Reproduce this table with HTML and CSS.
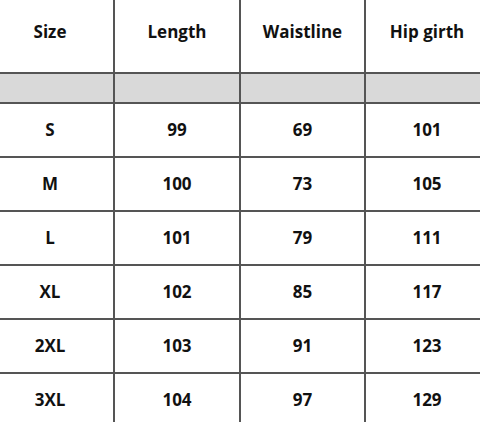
FILE: index.html
```html
<!DOCTYPE html>
<html lang="en">
<head>
<meta charset="utf-8">
<title>Size chart</title>
<link rel="stylesheet" href="styles.css">
</head>
<body>
<div class="chart">
  <div class="cell head">Size</div>
  <div class="cell head">Length</div>
  <div class="cell head">Waistline</div>
  <div class="cell head">Hip girth</div>

  <div class="cell band"></div>
  <div class="cell band"></div>
  <div class="cell band"></div>
  <div class="cell band"></div>

  <div class="cell">S</div><div class="cell">99</div><div class="cell">69</div><div class="cell">101</div>
  <div class="cell">M</div><div class="cell">100</div><div class="cell">73</div><div class="cell">105</div>
  <div class="cell">L</div><div class="cell">101</div><div class="cell">79</div><div class="cell">111</div>
  <div class="cell">XL</div><div class="cell">102</div><div class="cell">85</div><div class="cell">117</div>
  <div class="cell">2XL</div><div class="cell">103</div><div class="cell">91</div><div class="cell">123</div>
  <div class="cell">3XL</div><div class="cell">104</div><div class="cell">97</div><div class="cell">129</div>
</div>
</body>
</html>
```
FILE: styles.css
```css
html, body {
  margin: 0;
  padding: 0;
  background: #ffffff;
  overflow: hidden;
}

body {
  width: 480px;
  height: 422px;
}

.chart {
  display: grid;
  grid-template-columns: 128px 126px 125px 122px;
  grid-template-rows: 74px 30px repeat(6, 54px);
  margin-left: -13px;
  width: 501px;
  font-family: "Open Sans", "DejaVu Sans", sans-serif;
  font-weight: 700;
  font-size: 17px;
  color: #111111;
}

.cell {
  display: flex;
  align-items: center;
  justify-content: center;
  box-sizing: border-box;
  padding-bottom: 2px;
  border-bottom: 2px solid #555555;
  border-right: 2px solid #555555;
}

.cell:nth-child(4n) {
  border-right: none;
}

.head {
  padding-bottom: 9px;
}

.band {
  background: #d9d9d9;
}
```
